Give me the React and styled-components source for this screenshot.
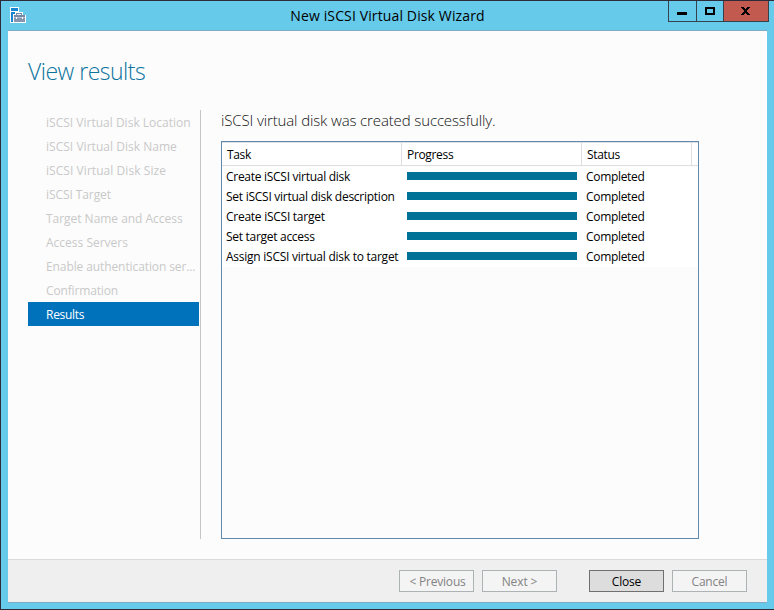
import React from "react";
import styled, { createGlobalStyle } from "styled-components";

const Global = createGlobalStyle`
  * { box-sizing: border-box; }
  body { margin: 0; }
  #root { font: 12px/20px "Open Sans", "Noto Sans", sans-serif; color: #000; }
`;

const Window = styled.div`
  width: 774px;
  height: 610px;
  display: flex;
  flex-direction: column;
  background: #66caea;
  border: solid #2e2c38;
  border-width: 1px 0 1px 1px;
  padding: 0 7px 6px 7px;
  overflow: hidden;
`;

const TitleBar = styled.header`
  height: 29px;
  flex: none;
  display: grid;
  grid-template-columns: 220px 1fr 220px;
`;

const AppIcon = styled.svg`
  display: block;
  margin: 6px 0 0 2px;
`;

const Title = styled.div`
  text-align: center;
  font-size: 14px;
  line-height: 29px;
  white-space: nowrap;
  letter-spacing: 0.13px;
`;

const Controls = styled.div`
  display: flex;
  justify-self: end;
  height: 21px;
  margin-right: -2px;
  border: solid #35414b;
  border-width: 0 1px 1px 1px;
`;

const Control = styled.button`
  width: ${(p) => p.$width}px;
  height: 20px;
  padding: 0;
  border: solid #35414b;
  border-width: 0 0 0 ${(p) => (p.$first ? 0 : 1)}px;
  background: ${(p) => (p.$danger ? "#c35a50" : "transparent")};
  svg { display: block; }
`;

const Panel = styled.div`
  flex: 1;
  display: flex;
  flex-direction: column;
  background: #fcfcfc;
  border: solid #7eabc2;
  border-width: 1px 0;
`;

const Heading = styled.h1`
  margin: 0;
  height: 79px;
  padding: 22px 0 0 20px;
  font-size: 23px;
  font-weight: 300;
  line-height: 36px;
  letter-spacing: -0.5px;
  color: #0b739c;
`;

const Body = styled.main`
  flex: 1;
  display: flex;
  padding-left: 20px;
`;

const Steps = styled.nav`
  width: 173px;
  height: 429px;
  border-right: 1px solid #c6c6c6;
`;

const Step = styled.div`
  width: ${(p) => (p.$active ? 171 : 172)}px;
  height: 24px;
  padding: 1px 0 0 18px;
  line-height: 24px;
  white-space: nowrap;
  letter-spacing: ${(p) => p.$spacing ?? 0}px;
  color: ${(p) => (p.$active ? "#fff" : "#c9c9c9")};
  background: ${(p) => (p.$active ? "#0072bc" : "transparent")};
`;

const Results = styled.section`
  width: 478px;
  margin-left: 20px;
`;

const Message = styled.p`
  margin: 0;
  height: 31px;
  font-size: 15px;
  font-weight: 300;
  line-height: 21px;
  letter-spacing: -0.13px;
  color: #111;
  white-space: nowrap;
`;

const Table = styled.div`
  height: 398px;
  border: 1px solid #6189af;
`;

const TableHead = styled.div`
  display: grid;
  grid-template-columns: 180px 180px 110px 1fr;
  height: 24px;
  margin-bottom: 1px;
  background: #fff;
  border: solid #dedfe1;
  border-width: 1px 0;
`;

const HeadCell = styled.div`
  height: 22px;
  padding-left: 5px;
  line-height: 24px;
  letter-spacing: -0.33px;
  border-right: 1px solid #dedfe1;
`;

const Row = styled.div`
  display: grid;
  grid-template-columns: 173px 187px 1fr;
  height: 20px;
  padding-left: 4px;
  background: #fff;
`;

const Task = styled.div`
  overflow: hidden;
  white-space: nowrap;
  letter-spacing: ${(p) => p.$spacing}px;
`;

const Bar = styled.div`
  width: 170px;
  height: 8px;
  margin: 5px 0 0 8px;
  background: #007297;
`;

const Status = styled.div`
  letter-spacing: -0.32px;
`;

const Footer = styled.footer`
  height: 43px;
  display: flex;
  justify-content: flex-end;
  gap: 8px;
  padding: 10px 20px 0 0;
  background: #efefef;
  border-top: 1px solid #dadada;
`;

const Button = styled.button`
  width: 75px;
  height: 22px;
  padding: 1px 0 0 ${(p) => p.$nudge ?? 0}px;
  margin-left: ${(p) => (p.$primary ? 24 : 0)}px;
  font: 12px/20px "Open Sans", "Noto Sans", sans-serif;
  letter-spacing: ${(p) => p.$spacing ?? -0.2}px;
  color: ${(p) => (p.$primary ? "#000" : "#838383")};
  background: ${(p) => (p.$primary ? "#dddddd" : "#f4f4f4")};
  border: 1px solid ${(p) => (p.$primary ? "#707070" : "#adb2b5")};
`;

const steps = [
  ["iSCSI Virtual Disk Location", 0.01],
  ["iSCSI Virtual Disk Name", 0.03],
  ["iSCSI Virtual Disk Size", 0.06],
  ["iSCSI Target", -0.08],
  ["Target Name and Access", -0.03],
  ["Access Servers", 0],
  ["Enable authentication ser...", -0.1],
  ["Confirmation", -0.15],
  ["Results", -0.28],
];

const tasks = [
  ["Create iSCSI virtual disk", -0.28],
  ["Set iSCSI virtual disk description", -0.26],
  ["Create iSCSI target", -0.26],
  ["Set target access", -0.29],
  ["Assign iSCSI virtual disk to target", -0.25],
];

export default function App() {
  return (
    <Window>
      <Global />
      <TitleBar>
        <AppIcon width="17" height="17" viewBox="0 0 17 17" shapeRendering="crispEdges">
          <path d="M0 0H9V5H13V8H16V16H0Z" fill="#fff" />
          <path d="M1 1H8V4H1Z" fill="#1785cf" />
          <path d="M1 5H5V7H3V15H1Z" fill="#1785cf" />
          <path d="M6 6H12V8H15V10H4V8H6Z" fill="#768aa5" />
          <path d="M7 7H11V8H7Z" fill="#eef3f8" />
          <path d="M4 10H15V11H4Z" fill="#b5c1d0" />
          <path d="M4 11H15V15H4Z" fill="#8596ae" />
          <path d="M6 10H7V12H6ZM12 10H13V12H12Z" fill="#fff" />
        </AppIcon>
        <Title>New iSCSI Virtual Disk Wizard</Title>
        <Controls>
          <Control $width={27} $first aria-label="Minimize">
            <svg width="27" height="20"><path d="M8 11h10v3H8z" /></svg>
          </Control>
          <Control $width={27} aria-label="Maximize">
            <svg width="26" height="20"><path d="M8 6h10v8H8zM10 8v4h6V8z" fillRule="evenodd" /></svg>
          </Control>
          <Control $width={45} $danger aria-label="Close window">
            <svg width="44" height="20" shapeRendering="crispEdges">
              <path d="M17 6h3v1h1v1h1v-1h1v-1h3v1h-1v1h-1v1h-1v2h1v1h1v1h1v1h-3v-1h-1v-1h-1v1h-1v1h-3v-1h1v-1h1v-1h1v-2h-1v-1h-1v-1h-1z" />
            </svg>
          </Control>
        </Controls>
      </TitleBar>
      <Panel>
        <Heading>View results</Heading>
        <Body>
          <Steps>
            {steps.map(([label, spacing]) => (
              <Step key={label} $spacing={spacing} $active={label === "Results"}>{label}</Step>
            ))}
          </Steps>
          <Results>
            <Message>iSCSI virtual disk was created successfully.</Message>
            <Table>
              <TableHead>
                <HeadCell>Task</HeadCell>
                <HeadCell>Progress</HeadCell>
                <HeadCell>Status</HeadCell>
              </TableHead>
              {tasks.map(([label, spacing]) => (
                <Row key={label}>
                  <Task $spacing={spacing}>{label}</Task>
                  <Bar />
                  <Status>Completed</Status>
                </Row>
              ))}
            </Table>
          </Results>
        </Body>
        <Footer>
          <Button disabled $nudge={2}>&lt; Previous</Button>
          <Button disabled $spacing={-0.1}>Next &gt;</Button>
          <Button $primary>Close</Button>
          <Button disabled>Cancel</Button>
        </Footer>
      </Panel>
    </Window>
  );
}
